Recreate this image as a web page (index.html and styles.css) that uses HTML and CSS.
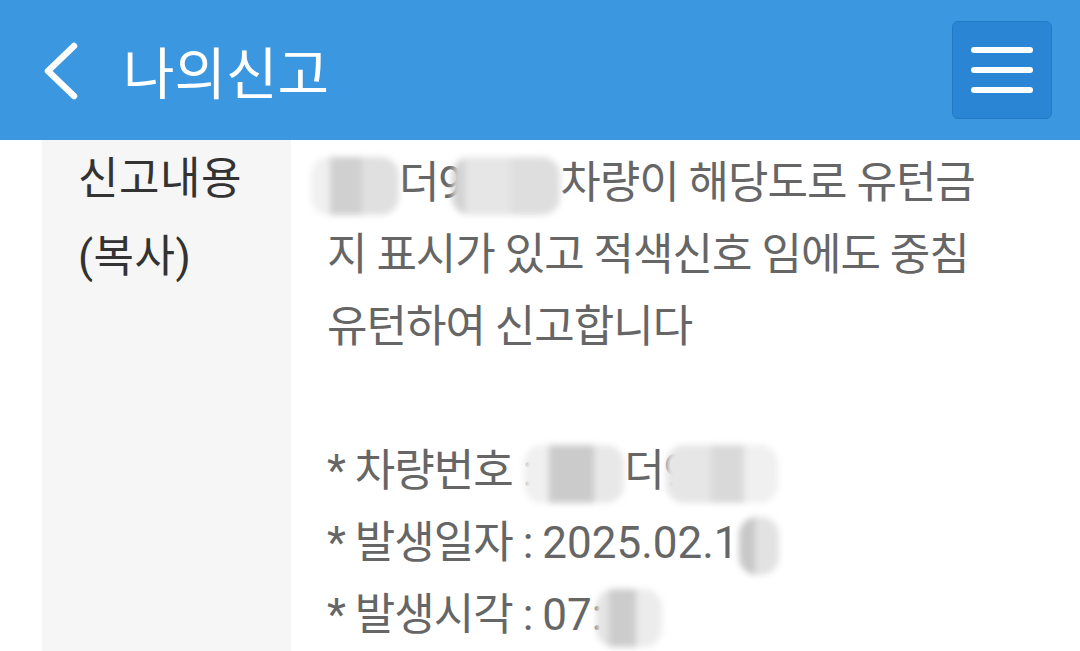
FILE: index.html
```html
<!DOCTYPE html>
<html lang="ko">
<head>
<meta charset="UTF-8">
<meta name="viewport" content="width=device-width, initial-scale=1.0">
<title>나의신고</title>
<link rel="stylesheet" href="styles.css">
</head>
<body>

<header class="topbar">
    <a class="back" href="#">
        <svg width="40" height="60" viewBox="0 0 40 60">
            <polyline points="32,6 6,31 32,56" fill="none" stroke="#fff" stroke-width="6.5" stroke-linecap="round" stroke-linejoin="round"/>
        </svg>
    </a>
    <h1 class="title">나의신고</h1>
    <button class="menu" type="button">
        <span></span>
        <span></span>
        <span></span>
    </button>
</header>

<main class="detail">
    <div class="row">
        <div class="label">신고내용<br>(복사)</div>
        <div class="value">
            <p><span class="mask mask-plate"></span>더9<span class="mask mask-tail"></span>차량이 해당도로 유턴금</p>
            <p>지 표시가 있고 적색신호 임에도 중침</p>
            <p>유턴하여 신고합니다</p>
            <p>&nbsp;</p>
            <p>* 차량번호 : <span class="mask mask-head"></span>더9<span class="mask mask-tail2"></span></p>
            <p>* 발생일자 : <span class="num">2025.02.1</span><span class="mask mask-day"></span></p>
            <p>* 발생시각 : <span class="num">07:</span><span class="mask mask-time"></span></p>
        </div>
    </div>
</main>

</body>
</html>
```

FILE: styles.css
```css
body {
  margin: 0;
  padding: 0;
  background: #fff;
  font-family: 'Noto Sans CJK KR', 'Noto Sans', sans-serif;
  overflow: hidden;
}
.topbar {
  height: 140px;
  background-color: #3a97e0;
  display: flex;
  align-items: center;
  padding: 0 28px 0 42px;
  box-sizing: border-box;
}
.back {
  display: flex;
  width: 40px;
  height: 60px;
}
.title {
  margin: 0 0 0 41px;
  color: #fff;
  font-size: 56px;
  font-weight: 400;
  letter-spacing: 0;
  line-height: 1;
  flex: 1;
}
.menu {
  width: 100px;
  height: 98px;
  background-color: #2a86d4;
  border: 1px solid #2479c4;
  border-radius: 6px;
  display: flex;
  flex-direction: column;
  justify-content: center;
  align-items: center;
  gap: 14px;
  padding: 0;
}
.menu span {
  display: block;
  width: 62px;
  height: 6px;
  border-radius: 3px;
  background: #fff;
}
.detail {
  padding-left: 42px;
}
.row {
  display: grid;
  grid-template-columns: 249px 1fr;
  min-height: 520px;
}
.label {
  background-color: #f6f6f6;
  color: #333;
  font-family: Roboto, 'Noto Sans CJK KR', sans-serif;
  font-size: 44px;
  letter-spacing: 0.5px;
  line-height: 78px;
  padding: 0 0 0 36px;
}
.value {
  color: #666;
  font-family: Roboto, 'Noto Sans CJK KR', sans-serif;
  font-size: 44px;
  letter-spacing: -1px;
  line-height: 72px;
  padding: 7px 0 0 36px;
  white-space: nowrap;
}
.value p {
  margin: 0;
}
.num {
  letter-spacing: 0;
}
/* 개인정보 가림 */
.mask {
  display: inline-block;
  vertical-align: middle;
  height: 58px;
  border-radius: 18px;
  filter: blur(3px);
  background: linear-gradient(90deg, #f0f0f0 0 22%, #d0d0d0 22% 58%, #e0e0e0 58% 100%);
}
.mask-plate {
  width: 88px;
  margin-left: -16px;
}
.mask-tail {
  width: 108px;
  margin-left: -10px;
  background: linear-gradient(90deg, #d2d2d2 0 12%, #e6e6e6 12% 55%, #dedede 55% 100%);
}
.mask-head {
  width: 100px;
  margin-left: -18px;
  background: linear-gradient(90deg, #f0f0f0 0 25%, #cbcbcb 25% 70%, #e8e8e8 70% 100%);
}
.mask-tail2 {
  width: 112px;
  margin-left: -22px;
  background: linear-gradient(90deg, #e6e6e6 0 40%, #d9d9d9 40% 70%, #f0f0f0 70% 100%);
}
.mask-day {
  width: 40px;
  margin-left: 0;
  background: linear-gradient(90deg, #c8c8c8 0 40%, #e2e2e2 40% 100%);
}
.mask-time {
  width: 66px;
  margin-left: -6px;
  background: linear-gradient(90deg, #e4e4e4 0 20%, #cccccc 20% 60%, #ececec 60% 100%);
}
```
